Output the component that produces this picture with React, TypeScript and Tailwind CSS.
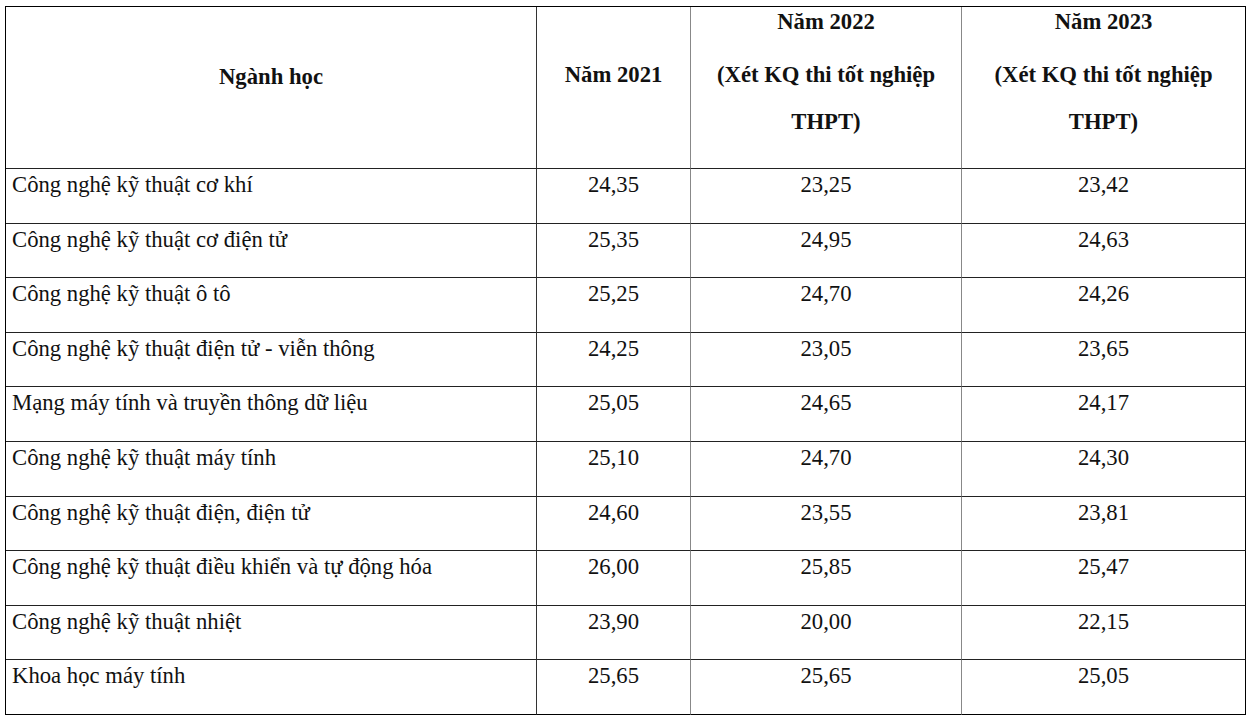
import React from 'react';

const rows: [string, string, string, string][] = [
    ['Công nghệ kỹ thuật cơ khí', '24,35', '23,25', '23,42'],
    ['Công nghệ kỹ thuật cơ điện tử', '25,35', '24,95', '24,63'],
    ['Công nghệ kỹ thuật ô tô', '25,25', '24,70', '24,26'],
    ['Công nghệ kỹ thuật điện tử - viễn thông', '24,25', '23,05', '23,65'],
    ['Mạng máy tính và truyền thông dữ liệu', '25,05', '24,65', '24,17'],
    ['Công nghệ kỹ thuật máy tính', '25,10', '24,70', '24,30'],
    ['Công nghệ kỹ thuật điện, điện tử', '24,60', '23,55', '23,81'],
    ['Công nghệ kỹ thuật điều khiển và tự động hóa', '26,00', '25,85', '25,47'],
    ['Công nghệ kỹ thuật nhiệt', '23,90', '20,00', '22,15'],
    ['Khoa học máy tính', '25,65', '25,65', '25,05'],
];

const serif = "font-['Liberation_Serif',serif]";

const YearHead = ({ year }: { year: string }) => (
    <div className="pt-[2px]">
        <div className="leading-[26px]">{year}</div>
        <div className="mt-[27px] leading-[26px]">(Xét KQ thi tốt nghiệp</div>
        <div className="mt-[21px] leading-[26px]">THPT)</div>
    </div>
);

const App = () => {
    return (
        <div className="min-h-screen bg-white pl-[5px] pt-[6px] font-['Liberation_Serif',serif] text-[22.7px] text-[#111]">
            <table className="w-[1241px] table-fixed border-separate border-spacing-0 border-l border-t border-black font-['Liberation_Serif',serif]">
                <colgroup>
                    <col className="w-[531px]" />
                    <col className="w-[154px]" />
                    <col className="w-[271px]" />
                    <col className="w-[284px]" />
                </colgroup>
                <thead>
                    <tr className="h-[162px]">
                        <th className={`${serif} border-b border-r border-b-[#222] border-r-[#333] p-0 pt-[57px] text-center align-top font-bold leading-[26px]`}>Ngành học</th>
                        <th className={`${serif} border-b border-r border-b-[#222] border-r-[#888] p-0 pt-[55px] text-center align-top font-bold leading-[26px]`}>Năm 2021</th>
                        <th className={`${serif} border-b border-r border-b-[#222] border-r-[#888] p-0 text-center align-top font-bold`}>
                            <YearHead year="Năm 2022" />
                        </th>
                        <th className={`${serif} border-b border-r border-b-[#222] border-r-black p-0 text-center align-top font-bold`}>
                            <YearHead year="Năm 2023" />
                        </th>
                    </tr>
                </thead>
                <tbody>
                    {rows.map((r, i) => {
                        const last = i === rows.length - 1;
                        const bb = last ? 'border-b-black' : 'border-b-[#222]';
                        return (
                            <tr key={i} className="h-[54.6px]">
                                <td className={`${serif} border-b border-r ${bb} border-r-[#333] p-0 pl-[6px] pt-[3px] align-top leading-[26px]`}>{r[0]}</td>
                                <td className={`${serif} border-b border-r ${bb} border-r-[#888] p-0 pt-[3px] text-center align-top leading-[26px]`}>{r[1]}</td>
                                <td className={`${serif} border-b border-r ${bb} border-r-[#888] p-0 pt-[3px] text-center align-top leading-[26px]`}>{r[2]}</td>
                                <td className={`${serif} border-b border-r ${bb} border-r-black p-0 pt-[3px] text-center align-top leading-[26px]`}>{r[3]}</td>
                            </tr>
                        );
                    })}
                </tbody>
            </table>
        </div>
    );
};

export default App;
